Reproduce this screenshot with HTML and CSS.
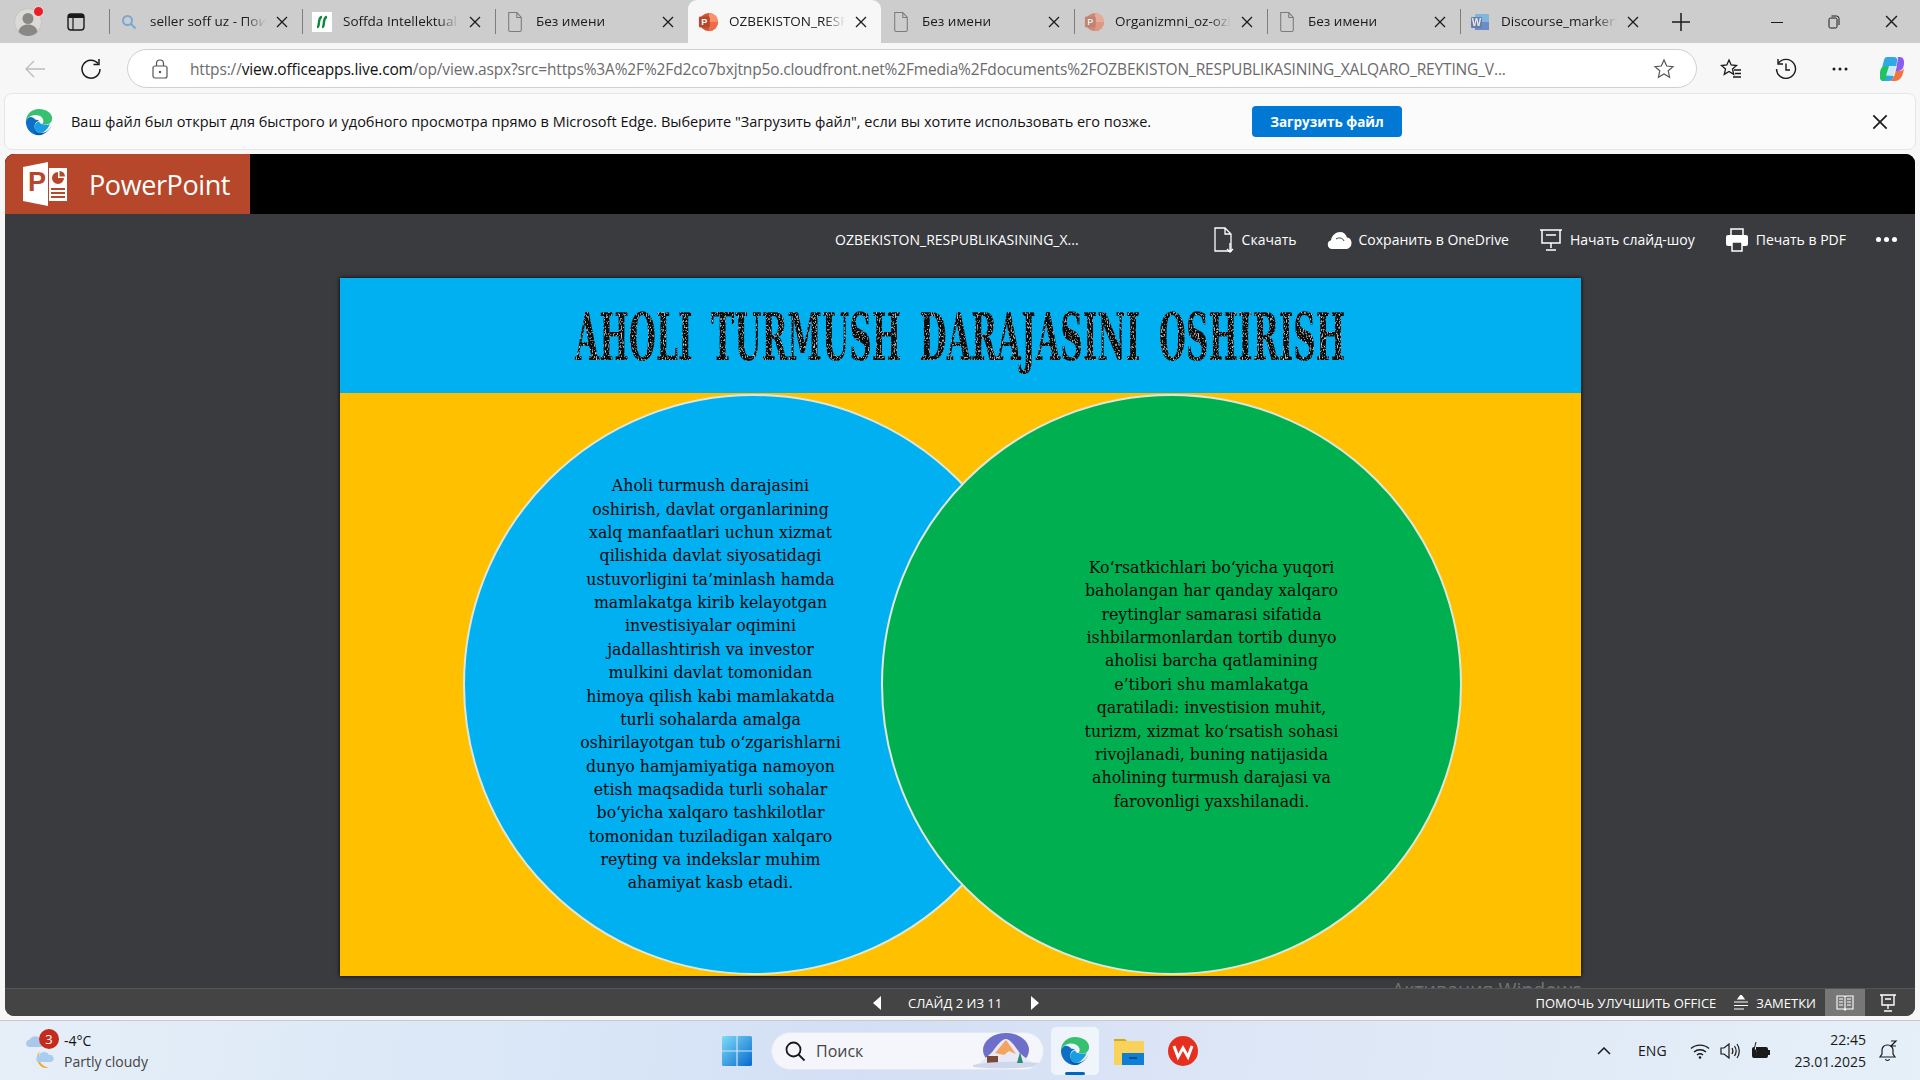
FILE: index.html
```html
<!DOCTYPE html>
<html lang="ru">
<head>
<meta charset="utf-8">
<title>PowerPoint</title>
<link rel="stylesheet" href="styles.css">
</head>
<body>
<svg class="defs" width="0" height="0">
  <defs>
    <filter id="grunge" x="0" y="0" width="100%" height="100%">
      <feTurbulence type="fractalNoise" baseFrequency="0.55" numOctaves="2" seed="4" result="n"/>
      <feColorMatrix in="n" type="matrix" values="0 0 0 0 .75  0 0 0 0 .75  0 0 0 0 .75  3.2 0 0 0 -1.75" result="spots"/>
      <feComposite in="spots" in2="SourceAlpha" operator="in" result="clipped"/>
      <feMerge><feMergeNode in="SourceGraphic"/><feMergeNode in="clipped"/></feMerge>
    </filter>
    <symbol id="page" viewBox="0 0 20 24"><path d="M3 1.5h9l5 5.5v14a1.6 1.6 0 0 1-1.600 1.600H4.600A1.600 1.600 0 0 1 3 21zM12 1.500V7h5" fill="none" stroke="#7c7c7c" stroke-width="1.200"/></symbol>
    <symbol id="x" viewBox="0 0 12 12"><path d="M1 1l10 10M11 1L1 11" stroke="#1c1c1c" stroke-width="1.300" fill="none"/></symbol>
    <symbol id="ppt" viewBox="0 0 22 22"><circle cx="12" cy="11" r="10" fill="#d35230"/><path d="M12 1a10 10 0 0 1 10 10H12z" fill="#ff8f6b"/><path d="M12 11h10a10 10 0 0 1-10 10z" fill="#ed6c47"/><rect x="1" y="5" width="12" height="12" rx="1.500" fill="#b7472a"/><text x="7" y="14.500" class="pptp">P</text></symbol>
    <symbol id="edge" viewBox="0 0 32 32">
      <path d="M16 1C7.700 1 1.200 7.200 1 15c2-4.500 6.500-7 11-7 5.500 0 9 3.200 9 7 0 1.300-.6 2.400-1.500 3.200 2.500 1.500 8 1 10.300-2.200.9-1.300 1.200-2.700 1.200-4.500C31 5.500 24 1 16 1z" fill="#35c16f"/>
      <path d="M1 15c-.3 8.500 6 16 14.500 16 2 0 3.800-.4 5.500-1.100-4 .4-10-2-10-8.900 0-3.500 2.300-6 5-6.500-1-.6-2.500-1-4-1C7.500 8 3 10.500 1 15z" fill="#0c6fc4"/>
      <path d="M30.500 19c-2 6.500-7.500 11-14.500 11.900-3-.3-6-3-5.500-8 .2 3 3.500 5.500 8.500 5.500 4 0 9-2.500 11.500-9.400z" fill="#0e4f9f"/>
      <path d="M11 22c0-3.500 2.300-6 5-6.500 1.200 1.800 2 3 3.500 2.700 2.500 1.500 6 1.500 9 0-3 7.500-8.500 10-11 10.800-4 0-6.500-3-6.500-7z" fill="#1b9de2"/>
    </symbol>
  </defs>
</svg>

<header class="tabstrip">
  <div class="profile">
    <span class="avatar"><svg width="28" height="28" viewBox="0 0 28 28"><circle cx="14" cy="14" r="13.500" fill="#dcdad7" stroke="#c6c4c1"/><circle cx="14" cy="10.500" r="5.500" fill="#8a8886"/><path d="M4.500 24c1-5.500 5-7.500 9.500-7.500s8.500 2 9.500 7.500a13.500 13.500 0 0 1-19 0z" fill="#8a8886"/></svg><i class="dot"></i></span>
    <svg class="tabs-btn" width="18" height="18" viewBox="0 0 18 18"><rect x="1" y="1" width="16" height="16" rx="3" fill="none" stroke="#1a1a1a" stroke-width="1.400"/><path d="M1 4.200a3 3 0 0 1 3-3.200h10a3 3 0 0 1 3 3.200V5H1z" fill="#1a1a1a"/><path d="M6 5v12" stroke="#1a1a1a" stroke-width="1.200"/></svg>
  </div>
  <div class="tab">
    <span class="tab-ico"><svg width="16" height="16" viewBox="0 0 16 16"><circle cx="6.500" cy="6.500" r="4.500" fill="none" stroke="#76a8d4" stroke-width="2"/><path d="M10 10l4.500 4.500" stroke="#76a8d4" stroke-width="2"/></svg></span>
    <span class="tab-text">seller soff uz - Поиск</span>
    <svg class="tab-x"><use href="#x"/></svg>
  </div>
  <div class="tab">
    <span class="tab-ico soffda"><svg width="20" height="20" viewBox="0 0 20 20"><rect width="20" height="20" fill="#fff"/><path d="M5 15c2 0 1.500-2 2-5s.5-5 3-5M10 15c2 0 1.500-2 2-5s.5-5 3-5" fill="none" stroke="#0c8a3c" stroke-width="2.400"/></svg></span>
    <span class="tab-text">Soffda Intellektual mulk</span>
    <svg class="tab-x"><use href="#x"/></svg>
  </div>
  <div class="tab">
    <span class="tab-ico"><svg width="18" height="22"><use href="#page"/></svg></span>
    <span class="tab-text">Без имени</span>
    <svg class="tab-x"><use href="#x"/></svg>
  </div>
  <div class="tab tab-active">
    <span class="tab-ico"><svg width="20" height="20"><use href="#ppt"/></svg></span>
    <span class="tab-text">OZBEKISTON_RESPUBLIKA</span>
    <svg class="tab-x"><use href="#x"/></svg>
  </div>
  <div class="tab">
    <span class="tab-ico"><svg width="18" height="22"><use href="#page"/></svg></span>
    <span class="tab-text">Без имени</span>
    <svg class="tab-x"><use href="#x"/></svg>
  </div>
  <div class="tab">
    <span class="tab-ico faded"><svg width="20" height="20"><use href="#ppt"/></svg></span>
    <span class="tab-text">Organizmni_oz-oziga</span>
    <svg class="tab-x"><use href="#x"/></svg>
  </div>
  <div class="tab">
    <span class="tab-ico"><svg width="18" height="22"><use href="#page"/></svg></span>
    <span class="tab-text">Без имени</span>
    <svg class="tab-x"><use href="#x"/></svg>
  </div>
  <div class="tab">
    <span class="tab-ico faded"><svg width="20" height="20" viewBox="0 0 20 20"><rect x="5" y="2" width="14" height="16" rx="1" fill="#41a5ee"/><rect x="5" y="10" width="14" height="8" fill="#185abd"/><rect x="1" y="5" width="11" height="11" rx="1" fill="#103f91"/><text x="6.500" y="13.500" class="pptp">W</text></svg></span>
    <span class="tab-text">Discourse_markers_in</span>
    <svg class="tab-x"><use href="#x"/></svg>
  </div>
  <svg class="newtab" width="18" height="18" viewBox="0 0 18 18"><path d="M9 0v18M0 9h18" stroke="#1a1a1a" stroke-width="1.500"/></svg>
  <div class="wincontrols">
    <svg width="12" height="12" viewBox="0 0 12 12"><path d="M0 6.500h12" stroke="#1a1a1a"/></svg>
    <svg width="12" height="14" viewBox="0 0 12 14"><rect x="1" y="3" width="8" height="10" rx="1.500" fill="none" stroke="#1a1a1a"/><path d="M3.500 1h5a2.500 2.500 0 0 1 2.500 2.500V10" fill="none" stroke="#1a1a1a"/></svg>
    <svg width="13" height="13"><use href="#x"/></svg>
  </div>
</header>

<nav class="toolbar">
  <svg class="back" width="22" height="20" viewBox="0 0 22 20"><path d="M21 10H2M10 2l-8 8 8 8" fill="none" stroke="#bdbdbd" stroke-width="1.400"/></svg>
  <svg class="reload" width="22" height="22" viewBox="0 0 22 22"><path d="M18 5.500A9 9 0 1 0 20 11" fill="none" stroke="#1a1a1a" stroke-width="1.500"/><path d="M19 1v5.500h-5.500" fill="none" stroke="#1a1a1a" stroke-width="1.500"/></svg>
  <div class="address">
    <svg class="lock" width="16" height="20" viewBox="0 0 16 20"><rect x="1" y="7" width="14" height="12" rx="2" fill="none" stroke="#555" stroke-width="1.200"/><path d="M4.500 7V4.500a3.500 3.500 0 0 1 7 0V7" fill="none" stroke="#555" stroke-width="1.200"/><circle cx="8" cy="13" r="1.200" fill="#555"/></svg>
    <span class="url"><span class="url-dim">https://</span>view.officeapps.live.com<span class="url-dim">/op/view.aspx?src=https%3A%2F%2Fd2co7bxjtnp5o.cloudfront.net%2Fmedia%2Fdocuments%2FOZBEKISTON_RESPUBLIKASINING_XALQARO_REYTING_V...</span></span>
    <svg class="star" width="22" height="22" viewBox="0 0 22 22"><path d="M11 2l2.700 6 6.300.6-4.800 4.200 1.400 6.400L11 16l-5.600 3.200 1.400-6.400L2 8.600 8.300 8z" fill="none" stroke="#555" stroke-width="1.200"/></svg>
  </div>
  <div class="tool-icons">
    <svg width="22" height="22" viewBox="0 0 22 22"><path d="M9 2l2.200 5 5.300.5-4 3.500 1.200 5.300L9 13.500l-4.700 2.800L5.500 11l-4-3.500L6.800 7z" fill="none" stroke="#1a1a1a" stroke-width="1.300"/><path d="M14 12h7M15 15.500h6M13 19h8" stroke="#1a1a1a" stroke-width="1.300"/></svg>
    <svg width="22" height="22" viewBox="0 0 22 22"><path d="M3.500 5A9.500 9.500 0 1 1 1.500 11" fill="none" stroke="#1a1a1a" stroke-width="1.400"/><path d="M3 1v5h5M11 5.500V12h4" fill="none" stroke="#1a1a1a" stroke-width="1.400"/></svg>
    <svg width="18" height="6" viewBox="0 0 18 6"><circle cx="3" cy="3" r="1.500" fill="#1a1a1a"/><circle cx="9" cy="3" r="1.500" fill="#1a1a1a"/><circle cx="15" cy="3" r="1.500" fill="#1a1a1a"/></svg>
    <svg class="copilot" width="28" height="28" viewBox="0 0 28 28"><path d="M9 2h7c2 0 3 1 3.500 3L15 23c-.5 2-2 3-4 3H6c-3 0-4.500-2-4-5L6 5c.4-2 1.500-3 3-3z" fill="#2fa8e6"/><path d="M2 18c0-4 2-7 6-7h3l-3 12c-.5 2-1.500 3-3 3-2 0-3-3-3-8z" fill="#22c35f"/><path d="M19 2h3c3 0 4.500 3 4 7-.5 4-2 7-6 7h-3l3-11c.4-1.500-.2-3-1-3z" fill="#8b5cf0"/><path d="M17 16h5c1.500 0 3.500-1 4-3-.5 6-3 13-9 13h-6c2 0 3-1 4-3z" fill="#f2743c"/><path d="M11 11h8l-2.500 10-8.500-.5z" fill="#fff" opacity=".75"/></svg>
  </div>
</nav>

<section class="infobar">
  <svg class="info-logo" width="28" height="28"><use href="#edge"/></svg>
  <span class="info-text">Ваш файл был открыт для быстрого и удобного просмотра прямо в Microsoft Edge. Выберите "Загрузить файл", если вы хотите использовать его позже.</span>
  <button class="info-btn">Загрузить файл</button>
  <svg class="info-x" width="16" height="16"><use href="#x"/></svg>
</section>

<main class="office">
  <div class="brandbar">
    <div class="brand">
      <svg class="brand-logo" width="46" height="46" viewBox="0 0 46 46">
        <path d="M1 6l25-5v44L1 40z" fill="#fff"/><path d="M27 7h18v33H27z" fill="#fff"/>
        <text x="6" y="30" class="brand-p">P</text>
        <path d="M36 11a6 6 0 1 0 6 6h-6z" fill="#b7472a"/><path d="M37.500 10a6 6 0 0 1 5.500 5.500h-5.500z" fill="#b7472a"/>
        <path d="M29 27h14v2H29zM29 31h14v2H29zM29 35h14v2H29z" fill="#b7472a"/>
      </svg>
      <span class="brand-name">PowerPoint</span>
    </div>
  </div>
  <div class="cmdbar">
    <span class="doc-title">OZBEKISTON_RESPUBLIKASINING_X...</span>
    <div class="cmds">
      <span class="cmd cmd-dl"><svg width="22" height="26" viewBox="0 0 22 26"><path d="M2 1h10l6 6v17H2zM12 1v6h6" fill="none" stroke="#fff" stroke-width="1.300"/><path d="M17 16v9M14 22l3 3 3-3" fill="none" stroke="#fff" stroke-width="1.300"/></svg>Скачать</span>
      <span class="cmd cmd-od"><svg width="25" height="20" viewBox="0 0 25 20"><path d="M5 19a4.500 4.500 0 0 1-1-8.800C5 5 9 2 13 2c3.500 0 6 2 7 5.500 3 .3 4.500 2.800 4.500 5.500 0 3.500-2.500 6-5.500 6z" fill="#fff"/><path d="M9 9c3-2 7-1 8 2" fill="none" stroke="#3a3b3f"/></svg>Сохранить в OneDrive</span>
      <span class="cmd cmd-ss"><svg width="24" height="24" viewBox="0 0 24 24"><path d="M1 2h22M3 2v13h18V2M12 15v5M7 22h10M7 7h10" fill="none" stroke="#fff" stroke-width="1.500"/></svg>Начать слайд-шоу</span>
      <span class="cmd cmd-pr"><svg width="24" height="24" viewBox="0 0 24 24"><path d="M6 7V1h12v6" fill="none" stroke="#fff" stroke-width="1.500"/><rect x="1" y="7" width="22" height="11" rx="2" fill="#fff"/><rect x="7" y="14" width="10" height="9" fill="#3a3b3f" stroke="#fff" stroke-width="1.500"/></svg>Печать в PDF</span>
      <span class="cmd-more"><i></i><i></i><i></i></span>
    </div>
  </div>
  <div class="stage">
    <div class="slide">
      <div class="slide-head"><h1 class="slide-title">AHOLI TURMUSH DARAJASINI OSHIRISH</h1></div>
      <div class="slide-body">
        <div class="circle circle-blue"><p>Aholi turmush darajasini<br>oshirish, davlat organlarining<br>xalq manfaatlari uchun xizmat<br>qilishida davlat siyosatidagi<br>ustuvorligini ta’minlash hamda<br>mamlakatga kirib kelayotgan<br>investisiyalar oqimini<br>jadallashtirish va investor<br>mulkini davlat tomonidan<br>himoya qilish kabi mamlakatda<br>turli sohalarda amalga<br>oshirilayotgan tub o‘zgarishlarni<br>dunyo hamjamiyatiga namoyon<br>etish maqsadida turli sohalar<br>bo‘yicha xalqaro tashkilotlar<br>tomonidan tuziladigan xalqaro<br>reyting va indekslar muhim<br>ahamiyat kasb etadi.</p></div>
        <div class="circle circle-green"><p>Ko‘rsatkichlari bo‘yicha yuqori<br>baholangan har qanday xalqaro<br>reytinglar samarasi sifatida<br>ishbilarmonlardan tortib dunyo<br>aholisi barcha qatlamining<br>e’tibori shu mamlakatga<br>qaratiladi: investision muhit,<br>turizm, xizmat ko‘rsatish sohasi<br>rivojlanadi, buning natijasida<br>aholining turmush darajasi va<br>farovonligi yaxshilanadi.</p></div>
      </div>
    </div>
    <div class="activation">
      <div class="act-1">Активация Windows</div>
      <div class="act-2">Чтобы активировать Windows, перейдите в раздел "Параметры".</div>
    </div>
  </div>
  <div class="statusbar">
    <div class="slide-nav">
      <svg width="10" height="14" viewBox="0 0 10 14"><path d="M9 0v14L1 7z" fill="#fff"/></svg>
      <span class="slide-count">СЛАЙД 2 ИЗ 11</span>
      <svg width="10" height="14" viewBox="0 0 10 14"><path d="M1 0v14l8-7z" fill="#fff"/></svg>
    </div>
    <div class="status-right">
      <span class="help">ПОМОЧЬ УЛУЧШИТЬ OFFICE</span>
      <svg class="notes-ico" width="14" height="16" viewBox="0 0 14 16"><path d="M7 0l3 4H4zM0 7h14M0 10.500h14M0 14h10" fill="#fff" stroke="#fff" stroke-width="1.200"/></svg>
      <span class="notes">ЗАМЕТКИ</span>
      <span class="view view-on"><svg width="18" height="18" viewBox="0 0 18 18"><path d="M9 3v14M1 2h7l1 1 1-1h7v13h-7l-1 1-1-1H1zM3 5h4M3 8h4M3 11h4M11 5h4M11 8h4M11 11h4" fill="none" stroke="#fff" stroke-width="1.100"/></svg></span>
      <span class="view"><svg width="18" height="18" viewBox="0 0 18 18"><path d="M1 1h16M3 1v10h12V1M9 11v4M5 17h8M6 5h6" fill="none" stroke="#fff" stroke-width="1.400"/></svg></span>
    </div>
  </div>
</main>

<footer class="taskbar">
  <div class="weather">
    <span class="w-ico">
      <svg width="36" height="38" viewBox="0 0 36 38"><path d="M3 14a4 4 0 0 1 3-6.500 6 6 0 0 1 11 1 3.500 3.500 0 0 1 0 6.500H5z" fill="#a9c8ec"/><path d="M16 19a9.500 9.500 0 0 0-1 13 9 9 0 0 0 10 3.500 11 11 0 0 1-9-16.500z" fill="#f5a623"/><path d="M14 30a3.500 3.500 0 0 1 1-6.500 5.500 5.500 0 0 1 10-.5 3.500 3.500 0 0 1 2 7z" fill="#a9cdf0"/></svg>
      <i class="badge">3</i>
    </span>
    <div class="w-text"><span class="w-temp">-4°C</span><span class="w-desc">Partly cloudy</span></div>
  </div>
  <div class="task-center">
    <svg class="winlogo" width="30" height="30" viewBox="0 0 30 30"><defs><linearGradient id="wg" x1="0" y1="0" x2="1" y2="1"><stop offset="0" stop-color="#7fdcf5"/><stop offset="1" stop-color="#0669cf"/></linearGradient></defs><path d="M0 1.500A1.500 1.500 0 0 1 1.500 0h12.900v14.400H0zM15.600 0h12.900A1.500 1.500 0 0 1 30 1.500v12.900H15.600zM0 15.600h14.400V30H1.500A1.500 1.500 0 0 1 0 28.500zM15.600 15.600H30v12.900a1.500 1.500 0 0 1-1.500 1.500H15.600z" fill="url(#wg)"/></svg>
    <div class="search">
      <svg width="22" height="22" viewBox="0 0 22 22"><circle cx="9.500" cy="9.500" r="7" fill="none" stroke="#1a1a1a" stroke-width="1.800"/><path d="M14.500 14.500l6 6" stroke="#1a1a1a" stroke-width="1.800"/></svg>
      <span class="search-text">Поиск</span>
      <svg class="search-art" width="66" height="38" viewBox="0 0 66 38"><ellipse cx="33" cy="18" rx="23" ry="17" fill="#6d6fc8"/><path d="M6 32c5-6 10-8 14-13 5-7 9-12 13-12s8 6 13 13c4 5 10 7 14 12z" fill="#e9e9f5"/><path d="M22 21l11-13 10 14-7-3-5 4z" fill="#f3a55f"/><rect x="14" y="24" width="11" height="7" fill="#7a4a36"/><path d="M0 33c15-4 50-4 66-2v3c-20 3-50 3-66 1z" fill="#cfd7ee"/><path d="M44 31l3-11 3 11z" fill="#2f8a6b"/></svg>
    </div>
    <span class="task-app task-on">
      <svg width="30" height="30"><use href="#edge"/></svg>
      <i class="run"></i>
    </span>
    <span class="task-app">
      <svg width="30" height="30" viewBox="0 0 30 30"><path d="M0 3h11l3 3h-14z" fill="#d9a514"/><rect y="5" width="30" height="24" fill="#f9d25c"/><rect x="8" y="17" width="22" height="12" fill="#0f7fd6"/><path d="M15 22h8" stroke="#0a4f8f" stroke-width="2"/></svg>
    </span>
    <span class="task-app">
      <svg width="30" height="30" viewBox="0 0 30 30"><circle cx="15" cy="15" r="15" fill="#e6301f"/><path d="M6 10l4 11 5-9 5 9 4-11" fill="none" stroke="#fff" stroke-width="3"/></svg>
    </span>
  </div>
  <div class="tray">
    <svg class="chev" width="14" height="8" viewBox="0 0 14 8"><path d="M1 7l6-6 6 6" fill="none" stroke="#1a1a1a" stroke-width="1.500"/></svg>
    <span class="lang">ENG</span>
    <svg class="wifi" width="20" height="16" viewBox="0 0 20 16"><path d="M1 5.500c5-4.500 13-4.500 18 0M4 9c3.500-3 8.500-3 12 0M7 12c1.700-1.400 4.300-1.400 6 0" fill="none" stroke="#1a1a1a" stroke-width="1.400"/><circle cx="10" cy="14.500" r="1.300" fill="#1a1a1a"/></svg>
    <svg class="vol" width="20" height="18" viewBox="0 0 20 18"><path d="M1 6h3l5-4v14l-5-4H1z" fill="none" stroke="#1a1a1a" stroke-width="1.200"/><path d="M12 6c1.200 2 1.200 4 0 6M14.500 4c2 3 2 7 0 10M17 2c3 4 3 10 0 14" fill="none" stroke="#1a1a1a" stroke-width="1.200"/></svg>
    <svg class="batt" width="20" height="18" viewBox="0 0 20 18"><rect x="1" y="5" width="16" height="11" rx="2" fill="#1a1a1a"/><rect x="17" y="8" width="2" height="5" fill="#1a1a1a"/><path d="M5 0L3 8h3l-1 6" fill="#f2f6fb" stroke="#1a1a1a"/></svg>
    <div class="clock"><span>22:45</span><span>23.01.2025</span></div>
    <svg class="bell" width="20" height="22" viewBox="0 0 20 22"><path d="M9 5a5 5 0 0 0-5 5v4l-2 3h15l-2-3v-4a5 5 0 0 0-5-5zM7.500 19c.4 2 3.600 2 4 0" fill="none" stroke="#1a1a1a" stroke-width="1.200"/><path d="M13 1h5l-5 5h5" fill="none" stroke="#1a1a1a" stroke-width="1.200"/></svg>
  </div>
</footer>
</body>
</html>
```

FILE: styles.css
```css
* { box-sizing: border-box; }
html, body { margin: 0; height: 1080px; width: 1920px; overflow: hidden; }
body {
  display: flex; flex-direction: column;
  background: #f7f7f7; color: #1a1a1a;
  font-family: "Open Sans", "Noto Sans", sans-serif; font-size: 14px;
}
.defs { position: absolute; }
svg { display: block; flex: none; }
.pptp { font: 700 10px "Liberation Sans", sans-serif; fill: #fff; text-anchor: middle; }

/* tab strip */
.tabstrip { height: 43px; background: #cdcdcd; display: flex; align-items: center; flex: none; position: relative; }
.profile { width: 109px; display: flex; align-items: center; padding-left: 14px; gap: 25px; height: 100%; flex: none; }
.avatar { position: relative; display: block; width: 28px; height: 28px; margin-top: 1px; }
.dot { position: absolute; right: -2px; top: -2px; width: 9px; height: 9px; border-radius: 50%; background: #ee1c25; border: 1px solid #e8e8e8; box-sizing: content-box; }
.tab {
  width: 193px; height: 100%; flex: none; display: flex; align-items: center;
  padding-left: 9px; position: relative; font-size: 13.500px;
}
.tab::before { content: ""; position: absolute; left: 0; top: 9px; bottom: 9px; width: 1px; background: #7d7d7d; }
.tab:last-of-type::after { content: ""; position: absolute; right: 0; top: 9px; bottom: 9px; width: 1px; background: #7d7d7d; }
.tab-ico { width: 22px; display: flex; justify-content: center; flex: none; margin-right: 10px; }
.faded { opacity: .55; }
.tab-text {
  width: 116px; overflow: hidden; white-space: nowrap; flex: none;
  -webkit-mask-image: linear-gradient(90deg, #000 82%, transparent 100%);
  mask-image: linear-gradient(90deg, #000 82%, transparent 100%);
  margin-top: -1px;
}
.tab-x { width: 12px; height: 12px; margin-left: 10px; }
.tab-active { background: #f7f7f7; border-radius: 9px 9px 0 0; }
.tab-active::before, .tab-active + .tab::before { display: none; }
.newtab { margin-left: 19px; }
.wincontrols { margin-left: auto; display: flex; align-items: center; gap: 45px; padding-right: 22px; }

/* toolbar */
.toolbar { height: 47px; flex: none; display: flex; align-items: center; background: #f7f7f7; padding-top: 4px; }
.back { margin-left: 24px; }
.reload { margin-left: 34px; }
.address {
  margin-left: 25px; width: 1570px; height: 39px; background: #fff; border: 1px solid #cfcfcf;
  border-radius: 20px; display: flex; align-items: center; padding-left: 24px; padding-right: 21px;
}
.lock { margin-right: 22px; }
.url { width: 1439px; white-space: nowrap; overflow: hidden; font-size: 15.500px; color: #111; letter-spacing: -.15px; }
.url-dim { color: #6b6b6b; }
.star { margin-left: auto; }
.tool-icons { display: flex; align-items: center; margin-left: 23px; }
.tool-icons svg:nth-child(1) { margin-right: 33px; }
.tool-icons svg:nth-child(2) { margin-right: 34px; }
.tool-icons svg:nth-child(3) { margin-right: 29px; }

/* info bar */
.infobar {
  height: 57px; margin: 3px 4px 0; flex: none; background: #fbfbfb; border: 1px solid #e6e6e6; border-radius: 8px;
  display: flex; align-items: center; padding-left: 20px;
}
.info-logo { margin-right: 18px; }
.info-text { width: 1181px; white-space: nowrap; font-size: 14.500px; color: #111; }
.info-btn {
  width: 150px; height: 31px; background: #0078d4; color: #fff; border: 0; border-radius: 4px;
  font: 700 13.500px "Open Sans", sans-serif;
}
.info-x { margin-left: 472px; margin-left: auto; margin-right: 27px; }

/* office frame */
.office {
  height: 862px; margin: 4px 5px 0; flex: none; background: #3a3b3f; border-radius: 9px;
  overflow: hidden; display: flex; flex-direction: column;
}
.brandbar { height: 60px; background: #000; flex: none; display: flex; }
.brand { width: 245px; background: #b7472a; display: flex; align-items: center; padding-left: 17px; }
.brand-logo { margin-right: 25px; }
.brand-p { font: 700 27px "Liberation Sans", sans-serif; fill: #b7472a; }
.brand-name { color: #fff; font-size: 27px; font-family: "Open Sans", sans-serif; letter-spacing: -.4px; margin-left: -4px; }
.cmdbar { height: 50px; flex: none; position: relative; color: #fff; font-size: 14px; display: flex; align-items: center; }
.doc-title { position: absolute; left: 830px; top: 16px; white-space: nowrap; }
.cmds { margin-left: auto; display: flex; align-items: center; padding-right: 18px; height: 100%; padding-top: 1px; }
.cmd { display: flex; align-items: center; white-space: nowrap; gap: 7px; margin-right: 30px; }
.cmd-more { display: flex; gap: 3px; margin-left: 0; }
.cmd-more i { width: 5px; height: 5px; border-radius: 50%; background: #fff; }
.stage { flex: 1; display: flex; justify-content: center; padding-top: 14px; position: relative; min-height: 0; }
.slide { width: 1241px; height: 698px; background: #ffc000; box-shadow: 0 0 4px #000; display: flex; flex-direction: column; flex: none; margin-left: 1px; }
.slide-head { height: 115px; background: #00b0f0; display: flex; align-items: center; justify-content: center; flex: none; }
.slide-title {
  margin: 0; color: #111; white-space: nowrap; font: 700 56px "DejaVu Serif Condensed", "DejaVu Serif", serif;
  transform: scale(.62, 1.18); word-spacing: 12px; filter: url(#grunge);
}
.slide-body { flex: 1; display: flex; padding-left: 123px; padding-top: 1px; }
.circle {
  width: 581px; height: 581px; border-radius: 50%; border: 2px solid #dfe8d8; flex: none;
  display: flex; align-items: center; justify-content: center; text-align: center;
  font: 400 17.500px/23.340px "DejaVu Serif Condensed", "DejaVu Serif", serif; color: #0a0a0a;
}
.circle p { margin: 0; white-space: nowrap; }
.circle-blue { background: #00b0f0; padding-right: 86px; }
.circle-green { background: #00b050; margin-left: -163px; padding-left: 80px; position: relative; }
.activation { position: absolute; left: 1387px; top: 15px; top: 14px; margin-top: 0; pointer-events: none; color: rgba(150,150,150,.62); white-space: nowrap; }
.activation { top: 712px; }
.act-1 { font-size: 19.500px; line-height: 28px; }
.act-2 { font-size: 13.500px; line-height: 20px; margin-top: 1px; }

.statusbar {
  height: 28px; flex: none; background: #444; border-top: 1px solid #555; position: relative;
  color: #fff; font-size: 13px; display: flex; align-items: center; justify-content: flex-end;
}
.slide-nav { position: absolute; left: 867px; top: 0; height: 100%; display: flex; align-items: center; }
.slide-count { margin: 0 28px 0 26px; white-space: nowrap; }
.status-right { display: flex; align-items: center; height: 100%; }
.help { margin-right: 18px; white-space: nowrap; }
.notes-ico { margin-right: 8px; }
.notes { margin-right: 9px; white-space: nowrap; }
.view { width: 40px; height: 100%; display: flex; align-items: center; justify-content: center; margin-right: 5px; }
.view:last-child { width: 50px; margin-right: 0; padding-right: 4px; }
.view-on { background: #777; margin-right: 0; }

/* taskbar */
.taskbar {
  flex: 1; margin-top: 4px; display: flex; align-items: center; position: relative;
  border-top: 1px solid #c9c9c9;
  background: linear-gradient(100deg, #e6eff8 0%, #d9e6f7 30%, #d4dff5 45%, #dce6f6 65%, #e6f0f9 100%);
}
.weather { display: flex; align-items: center; width: 500px; padding-left: 24px; flex: none; }
.w-ico { position: relative; display: block; width: 36px; height: 38px; margin-right: 4px; }
.badge {
  position: absolute; left: 15px; top: -3px; width: 20px; height: 20px; border-radius: 50%;
  background: #c42b1c; color: #fff; font-style: normal; font-size: 13px; line-height: 20px; text-align: center;
}
.w-text { display: flex; flex-direction: column; font-size: 14px; line-height: 21px; }
.w-temp { color: #111; }
.w-desc { color: #444; }
.task-center { display: flex; align-items: center; margin-left: 222px; }
.search {
  width: 273px; height: 38px; margin-left: 19px; background: #f4f6fb; border: 1px solid #e4e8f0; border-radius: 19px;
  display: flex; align-items: center; padding-left: 12px; overflow: hidden;
}
.search-text { margin-left: 10px; font-size: 16px; color: #444; }
.search-art { margin-left: auto; margin-right: 4px; }
.task-app { width: 48px; height: 48px; display: flex; align-items: center; justify-content: center; position: relative; margin-left: 7px; border-radius: 5px; }
.task-app + .task-app { margin-left: 6px; }
.task-on { background: rgba(255,255,255,.6); }
.run { position: absolute; left: 14px; bottom: 0; width: 20px; height: 3px; border-radius: 2px; background: #0067c0; }
.tray { margin-left: auto; display: flex; align-items: center; padding-right: 22px; }
.chev { margin-right: 27px; }
.lang { font-size: 14px; margin-right: 23px; }
.wifi { margin-right: 10px; }
.vol { margin-right: 11px; }
.batt { margin-right: 24px; }
.clock { display: flex; flex-direction: column; align-items: flex-end; font-size: 14px; line-height: 22px; margin-right: 12px; }
```
